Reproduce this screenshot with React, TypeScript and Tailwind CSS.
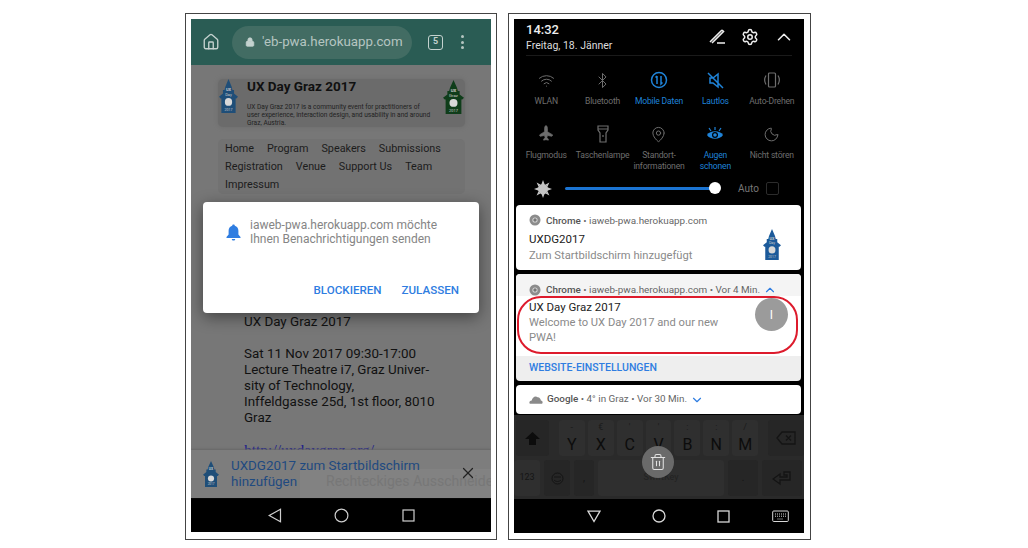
import React from "react";
import { Home, Lock, X, Wifi, Bluetooth, Plane, MapPin, Moon, Settings, ChevronUp, ChevronDown, Trash2 } from "lucide-react";

function Tower({ color, label, className }: { color: string; label: string; className: string }) {
  return (
    <svg viewBox="0 0 24 40" preserveAspectRatio="none" className={className}>
      <path d="M12 0 L16 9 L17 13 L19 13 L19 17 L24 21 L22 23 L21 23 L21 40 L3 40 L3 23 L2 23 L0 21 L5 17 L5 13 L7 13 L8 9 Z" fill={color} />
      <text x="12" y="14" textAnchor="middle" fontSize="5" fontWeight="700" fill="#c8c8c8">UX</text>
      <text x="12" y="20" textAnchor="middle" fontSize="5" fill="#c8c8c8">{label}</text>
      <circle cx="12" cy="27" r="4.6" fill="#d8d8d8" />
      <text x="12" y="37.5" textAnchor="middle" fontSize="4.5" fill="#c8c8c8">2017</text>
    </svg>
  );
}

function NavIcons({ kb }: { kb?: boolean }) {
  return (
    <div className="h-[34px] shrink-0 bg-black flex items-center">
      {kb ? (
        <div className="flex items-center pl-[73px] text-[#d8d8d8]">
          <svg width="14" height="13" viewBox="0 0 14 13" fill="none" stroke="currentColor" strokeWidth="1.3"><path d="M1 1.2 H13 L7 11.5 Z" /></svg>
          <svg width="14" height="14" viewBox="0 0 14 14" fill="none" stroke="currentColor" strokeWidth="1.3" className="ml-[51px]"><circle cx="7" cy="7" r="6" /></svg>
          <svg width="13" height="13" viewBox="0 0 13 13" fill="none" stroke="currentColor" strokeWidth="1.3" className="ml-[51px]"><rect x="1" y="1" width="11" height="11" /></svg>
          <svg width="17" height="13" viewBox="0 0 17 13" fill="none" stroke="currentColor" strokeWidth="1" className="ml-[42px]"><rect x="0.7" y="1" width="15.6" height="10.5" rx="1" /><path d="M3 4H14.5M3 6.2H14.5M5.5 9H11.5" strokeDasharray="1 1" /></svg>
        </div>
      ) : (
        <div className="flex items-center pl-[77px] text-[#cfcfcf]">
          <svg width="14" height="15" viewBox="0 0 14 15" fill="none" stroke="currentColor" strokeWidth="1.2"><path d="M12.5 1.2 V13.8 L1.2 7.5 Z" /></svg>
          <svg width="15" height="15" viewBox="0 0 15 15" fill="none" stroke="currentColor" strokeWidth="1.2" className="ml-[52px]"><circle cx="7.5" cy="7.5" r="6.4" /></svg>
          <svg width="13" height="13" viewBox="0 0 13 13" fill="none" stroke="currentColor" strokeWidth="1.2" className="ml-[53px]"><rect x="1" y="1" width="11" height="11" /></svg>
        </div>
      )}
    </div>
  );
}

function LeftPhone() {
  return (
    <div className="w-[312px] h-[527px] border border-[#444] p-[5px] bg-white shrink-0">
      <div className="relative w-[300px] h-[513px] flex flex-col overflow-hidden bg-[#777]">
        <div className="h-[46px] shrink-0 bg-[#2a5c54] flex items-center pl-[11px] text-[#c4d2cf]">
          <Home size={18} strokeWidth={1.8} />
          <div className="ml-[12px] w-[180px] h-[33px] rounded-full bg-[#426c63] flex items-center pl-[13px] overflow-hidden">
            <Lock size={10} fill="currentColor" strokeWidth={2} className="shrink-0" />
            <span className="ml-[7px] text-[13.3px] whitespace-nowrap text-[#b5c5c1]">'eb-pwa.herokuapp.com</span>
          </div>
          <div className="ml-[16px] w-[15px] h-[15px] rounded-[3px] border-[1.5px] border-[#c4d2cf] flex items-center justify-center text-[9px] font-bold">5</div>
          <div className="ml-[18px] flex flex-col gap-[2.5px]">
            <i className="w-[3px] h-[3px] rounded-full bg-[#b5c5c1]" />
            <i className="w-[3px] h-[3px] rounded-full bg-[#b5c5c1]" />
            <i className="w-[3px] h-[3px] rounded-full bg-[#b5c5c1]" />
          </div>
        </div>
        <div className="flex-1 min-h-0 overflow-hidden px-[27px] pt-[14px]">
          <div className="relative h-[48px] w-[247px] rounded-[5px] bg-[#6b6b6b] shadow-[0_0_4px_#6c6c6c]">
            <Tower color="#1f4e78" label="Day" className="absolute left-[1px] top-0 w-[19px] h-[34px]" />
            <Tower color="#0f3d1a" label="Graz" className="absolute right-[1px] top-[1px] w-[21px] h-[34px]" />
            <div className="absolute left-[29px] top-[-1px] text-[13.5px] font-bold text-[#101010] leading-[16px] whitespace-nowrap">UX Day Graz 2017</div>
            <div className="absolute left-[29px] top-[24px] text-[6.6px] leading-[8px] whitespace-nowrap text-[#222]">UX Day Graz 2017 is a community event for practitioners of<br />user experience, interaction design, and usability in and around<br />Graz, Austria.</div>
          </div>
          <div className="mt-[12px] h-[55px] w-[247px] rounded-[5px] bg-[#727272] pl-[7px] pt-[1px] text-[10.8px] leading-[18px] text-[#1c1c1c]">
            <div className="flex gap-[13px]"><span>Home</span><span>Program</span><span>Speakers</span><span>Submissions</span></div>
            <div className="flex gap-[13px]"><span>Registration</span><span>Venue</span><span>Support Us</span><span>Team</span></div>
            <div>Impressum</div>
          </div>
          <div className="mt-[120px] ml-[26px] text-[13.4px] leading-[16px] text-[#111]">
            <div>UX Day Graz 2017</div>
            <div className="mt-[16px]">Sat 11 Nov 2017 09:30-17:00</div>
            <div>Lecture Theatre i7, Graz Univer-</div>
            <div>sity of Technology,</div>
            <div>Inffeldgasse 25d, 1st floor, 8010</div>
            <div>Graz</div>
            <div className="mt-[16px] text-[15.5px] font-['Liberation_Serif',serif] text-[#1a1a8c] underline">http://uxdaygraz.org/</div>
          </div>
        </div>
        <div className="relative h-[48px] shrink-0 bg-[#7d7d7d] flex items-center pl-[12px] shadow-[0_-1px_2px_#666]">
          <div className="absolute left-[109px] right-0 top-[19px] bottom-0 bg-[#828282]" />
          <div className="absolute left-[135px] top-[23px] text-[14px] leading-[16px] text-[#777] whitespace-nowrap">Rechteckiges Ausschneiden</div>
          <Tower color="#1f4e78" label="" className="relative w-[16px] h-[26px] shrink-0" />
          <div className="relative ml-[12px] w-[200px] text-[13.4px] leading-[16px] text-[#1f4a80]">UXDG2017 zum Startbildschirm hinzufügen</div>
          <X size={18} strokeWidth={1.6} className="absolute right-[14px] top-[14px] text-[#222]" />
        </div>
        <NavIcons />
        <div className="absolute left-[12px] top-[183px] w-[276px] h-[111px] bg-white rounded-[4px] shadow-[0_4px_16px_rgba(0,0,0,0.45)]">
          <svg width="15" height="17" viewBox="0 0 15 17" fill="#2f7de1" className="absolute left-[23px] top-[22px]"><path d="M7.5 0.5C8.3 0.5 8.8 1 8.8 1.8C11 2.4 12.4 4.3 12.4 6.8V10.5L14.5 13V14H0.5V13L2.6 10.5V6.8C2.6 4.3 4 2.4 6.2 1.8C6.2 1 6.7 0.5 7.5 0.5ZM5.8 15H9.2C9.2 16 8.5 16.6 7.5 16.6C6.5 16.6 5.8 16 5.8 15Z" /></svg>
          <div className="absolute left-[47px] top-[16px] text-[12px] leading-[14px] text-[#858585] whitespace-nowrap">iaweb-pwa.herokuapp.com möchte<br />Ihnen Benachrichtigungen senden</div>
          <div className="absolute right-[20px] top-[81px] flex gap-[20px] text-[11.6px] leading-[14px] font-medium text-[#2f7de1]">
            <span>BLOCKIEREN</span><span>ZULASSEN</span>
          </div>
        </div>
      </div>
    </div>
  );
}

const tile = "flex flex-col items-center text-[8.6px] tracking-[-0.2px] leading-[11px] text-center";

function Tile({ icon, label, on }: { icon: React.ReactNode; label: React.ReactNode; on?: boolean }) {
  return (
    <div className={tile + (on ? " text-[#1f83d8]" : " text-[#6e6e6e]")}>
      <div className="h-[20px] flex items-center justify-center">{icon}</div>
      <div className="mt-[6px] whitespace-nowrap">{label}</div>
    </div>
  );
}

function Key({ c, sup }: { c: string; sup?: string }) {
  return (
    <div className="w-[26px] h-[36px] rounded-[3px] bg-[#2f2f2f] relative flex items-end justify-center pb-[3px] text-[16px] leading-[16px] text-[#0c0c0c]">
      {sup && <span className="absolute top-[2px] text-[9px] leading-[10px] text-[#1a1a1a]">{sup}</span>}
      {c}
    </div>
  );
}

function Card({ children, className }: { children: React.ReactNode; className?: string }) {
  return <div className={"rounded-[4px] w-[285px] " + (className || "")}>{children}</div>;
}

function ChromeDot() {
  return (
    <svg width="12" height="12" viewBox="0 0 12 12" className="shrink-0">
      <circle cx="6" cy="6" r="5.5" fill="#8c8c8c" />
      <circle cx="6" cy="6" r="2.6" fill="#d8d8d8" />
      <circle cx="6" cy="6" r="1.7" fill="#777" />
    </svg>
  );
}

function RightPhone() {
  return (
    <div className="w-[303px] h-[527px] border border-[#444] p-[5px] bg-white shrink-0 ml-[11px]">
      <div className="relative w-[290px] h-[514px] bg-black flex flex-col overflow-hidden">
        <div className="h-[37px] mx-[12px] shrink-0 flex justify-between border-b border-[#1a1a1a] text-white">
          <div className="pt-[3px]">
            <div className="text-[13px] leading-[16px] font-medium text-[#eee]">14:32</div>
            <div className="text-[10.5px] leading-[14px] mt-[1px] text-[#ddd]">Freitag, 18. Jänner</div>
          </div>
          <div className="flex items-start pt-[9px] text-[#eee]">
            <svg width="16" height="16" viewBox="0 0 16 16" fill="none" stroke="currentColor" strokeWidth="1.6"><path d="M1 14 L13 2 M13 2 L14.5 3.5 L3 15M8 15H16" /></svg>
            <Settings size={18} strokeWidth={2} className="ml-[16px]" />
            <ChevronUp size={22} strokeWidth={1.7} className="ml-[14px] -mr-[3px] -mt-[2px]" />
          </div>
        </div>
        <div className="h-[114px] shrink-0 grid grid-cols-5 grid-rows-[54px_1fr] px-[4px] pt-[14px]">
          <Tile icon={<Wifi size={17} strokeWidth={1.4} />} label="WLAN" />
          <Tile icon={<Bluetooth size={17} strokeWidth={1.4} />} label="Bluetooth" />
          <Tile on icon={<svg width="18" height="18" viewBox="0 0 18 18" fill="none" stroke="#1f83d8" strokeWidth="1.5"><circle cx="9" cy="9" r="7.5" /><path d="M7 5V13M5.5 6.5L7 5M11 5V13L12.5 11.5" /></svg>} label="Mobile Daten" />
          <Tile on icon={<svg width="17" height="17" viewBox="0 0 17 17" fill="none" stroke="#1f83d8" strokeWidth="1.5"><path d="M3 6H6L11 2V15L6 11H3ZM1 1L16 16" /></svg>} label="Lautlos" />
          <Tile icon={<svg width="18" height="16" viewBox="0 0 18 16" fill="none" stroke="currentColor" strokeWidth="1.2"><rect x="5.5" y="1" width="7" height="14" rx="1" /><path d="M3 3.5C1.5 6 1.5 10 3 12.5M15 3.5C16.5 6 16.5 10 15 12.5" /></svg>} label="Auto-Drehen" />
          <Tile icon={<Plane size={16} fill="currentColor" strokeWidth={1} className="-rotate-45" />} label="Flugmodus" />
          <Tile icon={<svg width="12" height="18" viewBox="0 0 12 18" fill="none" stroke="currentColor" strokeWidth="1.2"><path d="M1 1H11V5L9 8V17H3V8L1 5ZM1 4H11M6 10V12" /></svg>} label="Taschenlampe" />
          <Tile icon={<MapPin size={17} strokeWidth={1.4} />} label={<>Standort-<br />informationen</>} />
          <Tile on icon={<svg width="18" height="16" viewBox="0 0 18 16" fill="#1f83d8"><path d="M1 9C4 4 14 4 17 9C14 14 4 14 1 9Z" /><circle cx="9" cy="9" r="3" fill="#000" /><circle cx="9" cy="9" r="1.8" /><path d="M3 2L5 5M9 1V4M15 2L13 5" stroke="#1f83d8" strokeWidth="1.2" /></svg>} label={<>Augen<br />schonen</>} />
          <Tile icon={<Moon size={17} strokeWidth={1.4} />} label="Nicht stören" />
        </div>
        <div className="h-[35px] shrink-0 flex items-center pl-[20px] pt-[2px]">
          <svg width="18" height="18" viewBox="0 0 18 18" fill="#c4c4c4"><circle cx="9" cy="9" r="5.2" /><path d="M9 0L10.5 4H7.5ZM9 18L7.5 14H10.5ZM0 9L4 7.5V10.5ZM18 9L14 10.5V7.5ZM2.6 2.6L6.4 4.4L4.4 6.4ZM15.4 15.4L11.6 13.6L13.6 11.6ZM15.4 2.6L13.6 6.4L11.6 4.4ZM2.6 15.4L4.4 11.6L6.4 13.6Z" /></svg>
          <div className="ml-[13px] w-[150px] h-[3px] rounded-full bg-[#1b74d2] relative">
            <div className="absolute right-[-6px] top-[-5px] w-[12px] h-[12px] rounded-full bg-white" />
          </div>
          <span className="ml-[23px] text-[10px] text-[#777]">Auto</span>
          <div className="ml-[7px] w-[13px] h-[13px] rounded-[2px] border border-[#2c2c2c]" />
        </div>
        <div className="shrink-0 flex flex-col gap-[4px] pl-[2px]">
          <Card className="h-[65px] bg-white relative pl-[13px] pt-[9px]">
            <div className="flex items-center gap-[5px] text-[9.9px] leading-[11px] text-[#666]"><ChromeDot /><span><b className="font-medium text-[#555]">Chrome</b> • iaweb-pwa.herokuapp.com</span></div>
            <div className="mt-[6px] text-[11.5px] leading-[15px] text-[#222]">UXDG2017</div>
            <div className="mt-[1px] text-[11.2px] leading-[15px] text-[#8a8a8a]">Zum Startbildschirm hinzugefügt</div>
            <Tower color="#1c5a9a" label="Day" className="absolute right-[20px] top-[24px] w-[18px] h-[31px]" />
          </Card>
          <Card className="h-[107px] bg-[#eeeeee] overflow-hidden">
            <div className="h-[22px] bg-[#f4f4f4] pl-[13px] pt-[9px] flex items-center gap-[5px] text-[9.9px] leading-[11px] text-[#666]">
              <ChromeDot /><span className="whitespace-nowrap"><b className="font-medium text-[#555]">Chrome</b> • iaweb-pwa.herokuapp.com • Vor 4 Min.</span>
              <ChevronUp size={14} className="text-[#2f7de1] -ml-[2px]" />
            </div>
            <div className="h-[60px] bg-white pl-[13px] pt-[4px] relative">
              <div className="text-[11.5px] leading-[15px] text-[#222]">UX Day Graz 2017</div>
              <div className="mt-[1px] text-[11.2px] leading-[14.5px] text-[#8a8a8a] w-[210px]">Welcome to UX Day 2017 and our new PWA!</div>
              <div className="absolute left-[239px] top-[2px] w-[33px] h-[33px] rounded-full bg-[#9b9b9b] flex items-center justify-center text-[12px] text-white">I</div>
            </div>
            <div className="pl-[13px] pt-[5px] text-[10.5px] leading-[14px] font-medium text-[#2f7de1]">WEBSITE-EINSTELLUNGEN</div>
          </Card>
          <Card className="h-[29px] bg-white pl-[13px] flex items-center gap-[4px] text-[9.9px] text-[#666]">
            <svg width="14" height="9" viewBox="0 0 13 8" fill="#8a8a8a"><path d="M1 8C0 8 0 5 2.5 5C3 2 6 0 8 2C10 2 11 4 11 5C13 5 13 8 12 8Z" /></svg>
            <span className="whitespace-nowrap"><b className="font-medium text-[#555]">Google</b> • 4° in Graz • Vor 30 Min.</span>
            <ChevronDown size={14} className="text-[#2f7de1] -ml-[1px]" />
          </Card>
        </div>
        <div className="flex-1 min-h-0 mt-[1px] bg-[#2a2a2a] flex flex-col gap-[4px] pt-[5px]">
          <div className="flex items-start gap-[3px] pl-[2px]">
            <div className="w-[33px] h-[36px] rounded-[3px] bg-[#262626] flex items-center justify-center mr-[7px]">
              <svg width="15" height="15" viewBox="0 0 15 15" fill="#0c0c0c"><path d="M7.5 1L15 8H11V14H4V8H0Z" /></svg>
            </div>
            <Key c="Y" sup="-" /><Key c="X" sup="€" /><Key c="C" sup="'" /><Key c="V" sup="'" /><Key c="B" sup=":" /><Key c="N" sup=":" /><Key c="M" sup="/" />
            <div className="w-[36px] h-[36px] rounded-[3px] bg-[#262626] flex items-center justify-center ml-[7px]">
              <svg width="20" height="14" viewBox="0 0 20 14" fill="none" stroke="#141414" strokeWidth="1.3"><path d="M6 1H19V13H6L1 7ZM10 4.5L15 9.5M15 4.5L10 9.5" /></svg>
            </div>
          </div>
          <div className="flex items-start gap-[4px]">
            <div className="w-[26px] h-[36px] rounded-[3px] bg-[#2f2f2f] flex items-center justify-center text-[9px] text-[#151515]">123</div>
            <div className="w-[26px] h-[36px] rounded-[3px] bg-[#262626] flex items-center justify-center">
              <svg width="13" height="13" viewBox="0 0 13 13" fill="none" stroke="#141414"><circle cx="6.5" cy="6.5" r="5.5" /><path d="M3 8C5 10 8 10 10 8M3 5H10" /></svg>
            </div>
            <div className="w-[20px] h-[36px] rounded-[3px] bg-[#262626] text-center text-[10px] leading-[36px] text-[#141414]">,</div>
            <div className="w-[126px] h-[36px] rounded-[3px] bg-[#2f2f2f] flex items-center justify-center text-[9px] text-[#222]">SwiftKey</div>
            <div className="w-[30px] h-[36px] rounded-[3px] bg-[#262626] text-center text-[10px] leading-[36px] text-[#141414]">.</div>
            <div className="w-[40px] h-[36px] rounded-[3px] bg-[#262626] flex items-center justify-center">
              <svg width="20" height="16" viewBox="0 0 20 16" fill="none" stroke="#141414" strokeWidth="1.3"><path d="M12 2H18V10H8V14L1 9L8 4V7H15V5H12Z" /></svg>
            </div>
          </div>
        </div>
        <NavIcons kb />
        <div className="absolute left-[3px] top-[277px] w-[281px] h-[58px] rounded-[24px] border-2 border-[#dd1b2c]" />
        <div className="absolute left-[128px] top-[427px] w-[32px] h-[32px] rounded-full bg-[#6a6a6a] flex items-center justify-center text-[#e2e2e2]">
          <Trash2 size={18} strokeWidth={1.4} />
        </div>
      </div>
    </div>
  );
}

export default function App() {
  return (
    <div className="w-[1028px] h-[548px] bg-white flex pl-[185px] pt-[13px] font-['Roboto',sans-serif] overflow-hidden">
      <LeftPhone />
      <RightPhone />
    </div>
  );
}
